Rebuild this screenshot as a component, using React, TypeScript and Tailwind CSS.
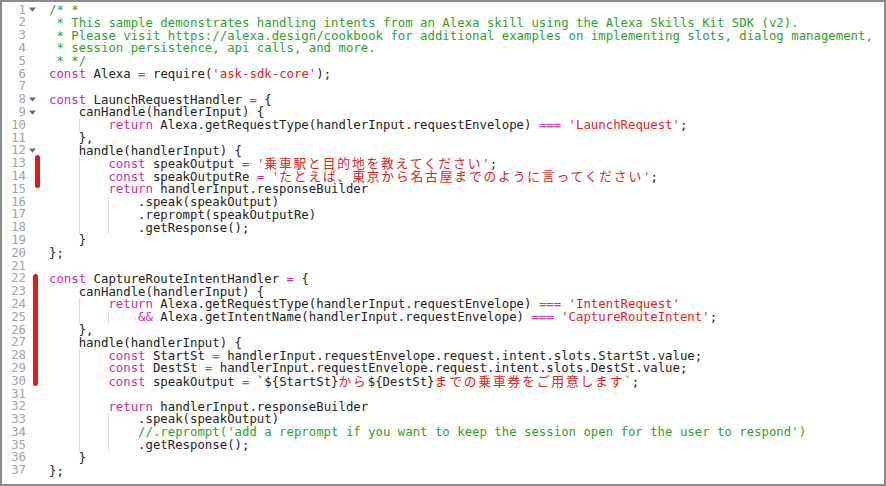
import type { ReactNode } from "react";

type Tok = [string, string];
type Line = { indent?: number; toks: Tok[]; fold?: boolean };

const k = (t: string): Tok => ["k", t];
const s = (t: string): Tok => ["s", t];
const c = (t: string): Tok => ["c", t];
const t = (x: string): Tok => ["t", x];

const LINES: Line[] = [
  { fold: true, toks: [c("/* *")] },
  { toks: [c(" * This sample demonstrates handling intents from an Alexa skill using the Alexa Skills Kit SDK (v2).")] },
  { toks: [c(" * Please visit https://alexa.design/cookbook for additional examples on implementing slots, dialog management,")] },
  { toks: [c(" * session persistence, api calls, and more.")] },
  { toks: [c(" * */")] },
  { toks: [k("const"), t(" Alexa "), k("="), t(" require("), s("'ask-sdk-core'"), t(");")] },
  { toks: [] },
  { fold: true, toks: [k("const"), t(" LaunchRequestHandler "), k("="), t(" {")] },
  { fold: true, indent: 4, toks: [t("canHandle(handlerInput) {")] },
  { indent: 8, toks: [k("return"), t(" Alexa.getRequestType(handlerInput.requestEnvelope) "), k("==="), t(" "), s("'LaunchRequest'"), t(";")] },
  { indent: 4, toks: [t("},")] },
  { fold: true, indent: 4, toks: [t("handle(handlerInput) {")] },
  { indent: 8, toks: [k("const"), t(" speakOutput "), k("="), t(" "), s("'乗車駅と目的地を教えてください'"), t(";")] },
  { indent: 8, toks: [k("const"), t(" speakOutputRe "), k("="), t(" "), s("'たとえば、東京から名古屋までのように言ってください'"), t(";")] },
  { indent: 8, toks: [k("return"), t(" handlerInput.responseBuilder")] },
  { indent: 12, toks: [t(".speak(speakOutput)")] },
  { indent: 12, toks: [t(".reprompt(speakOutputRe)")] },
  { indent: 12, toks: [t(".getResponse();")] },
  { indent: 4, toks: [t("}")] },
  { toks: [t("};")] },
  { toks: [] },
  { toks: [k("const"), t(" CaptureRouteIntentHandler "), k("="), t(" {")] },
  { indent: 4, toks: [t("canHandle(handlerInput) {")] },
  { indent: 8, toks: [k("return"), t(" Alexa.getRequestType(handlerInput.requestEnvelope) "), k("==="), t(" "), s("'IntentRequest'")] },
  { indent: 12, toks: [k("&&"), t(" Alexa.getIntentName(handlerInput.requestEnvelope) "), k("==="), t(" "), s("'CaptureRouteIntent'"), t(";")] },
  { indent: 4, toks: [t("},")] },
  { indent: 4, toks: [t("handle(handlerInput) {")] },
  { indent: 8, toks: [k("const"), t(" StartSt "), k("="), t(" handlerInput.requestEnvelope.request.intent.slots.StartSt.value;")] },
  { indent: 8, toks: [k("const"), t(" DestSt "), k("="), t(" handlerInput.requestEnvelope.request.intent.slots.DestSt.value;")] },
  { indent: 8, toks: [k("const"), t(" speakOutput "), k("="), t(" `${StartSt}"), s("から"), t("${DestSt}"), s("までの乗車券をご用意します`"), t(";")] },
  { indent: 8, toks: [] },
  { indent: 8, toks: [k("return"), t(" handlerInput.responseBuilder")] },
  { indent: 12, toks: [t(".speak(speakOutput)")] },
  { indent: 12, toks: [c("//.reprompt('add a reprompt if you want to keep the session open for the user to respond')")] },
  { indent: 12, toks: [t(".getResponse();")] },
  { indent: 4, toks: [t("}")] },
  { toks: [t("};")] },
];

const COLORS: Record<string, string> = {
  k: "text-[#cf2ba3]",
  s: "text-[#e3211c]",
  c: "text-[#2f9f2f]",
  t: "text-[#222222]",
};

// split japanese runs out so they get a CJK font and the editor's wide cell
function renderText(text: string): ReactNode[] {
  const parts = text.split(/([\u3000-\u30ff\u4e00-\u9fff\uff00-\uffef]+)/);
  return parts.map((p, i) =>
    i % 2 === 1 ? (
      <span key={i} className="font-['Noto_Sans_CJK_JP',sans-serif] text-[12.8px] leading-[12px] tracking-[1.8px]">
        {p}
      </span>
    ) : (
      p
    )
  );
}

function FoldArrow() {
  return (
    <svg width="7" height="5" viewBox="0 0 7 5">
      <path d="M0 0.5 L7 0.5 L3.5 4.8 Z" fill="#6b6b6b" />
    </svg>
  );
}

function CodeLine({ line }: { line: Line }) {
  const indent = line.indent ?? 0;
  const levels = Math.floor(indent / 4);
  return (
    <div className="flex h-[12.8px] items-center whitespace-pre">
      {Array.from({ length: levels }).map((_, i) => (
        <span
          key={i}
          className={`inline-block h-full w-[4ch] ${i > 0 ? "border-l border-[#dedede]" : ""}`}
        />
      ))}
      <span className="leading-[12px]">
        {line.toks.map(([kind, text], i) => (
          <span key={i} className={COLORS[kind]}>
            {renderText(text)}
          </span>
        ))}
      </span>
    </div>
  );
}

export default function App() {
  return (
    <div className="h-[486px] w-[886px] overflow-hidden border-2 border-[#8c8c8c] bg-white font-['DejaVu_Sans_Mono',monospace] text-[12.33px] leading-[12.8px]">
      <div className="relative flex pt-[1.6px]">
        <div className="w-[47px] shrink-0">
          {LINES.map((line, i) => (
            <div key={i} className="flex h-[12.8px] items-center">
              <span className="w-[24px] text-right text-[#a3a3a3]">{i + 1}</span>
              <span className="ml-[2px] flex w-[8px] items-center justify-center">
                {line.fold ? <FoldArrow /> : null}
              </span>
            </div>
          ))}
        </div>
        <div className="min-w-0 flex-1">
          {LINES.map((line, i) => (
            <CodeLine key={i} line={line} />
          ))}
        </div>
        {/* change markers in the gutter */}
        <div className="absolute left-[33px] top-[153px] h-[33px] w-[5px] rounded-full bg-[#e01b1b]" />
        <div className="absolute left-[31px] top-[272px] h-[112px] w-[5px] rounded-full bg-[#e01b1b]" />
      </div>
    </div>
  );
}
